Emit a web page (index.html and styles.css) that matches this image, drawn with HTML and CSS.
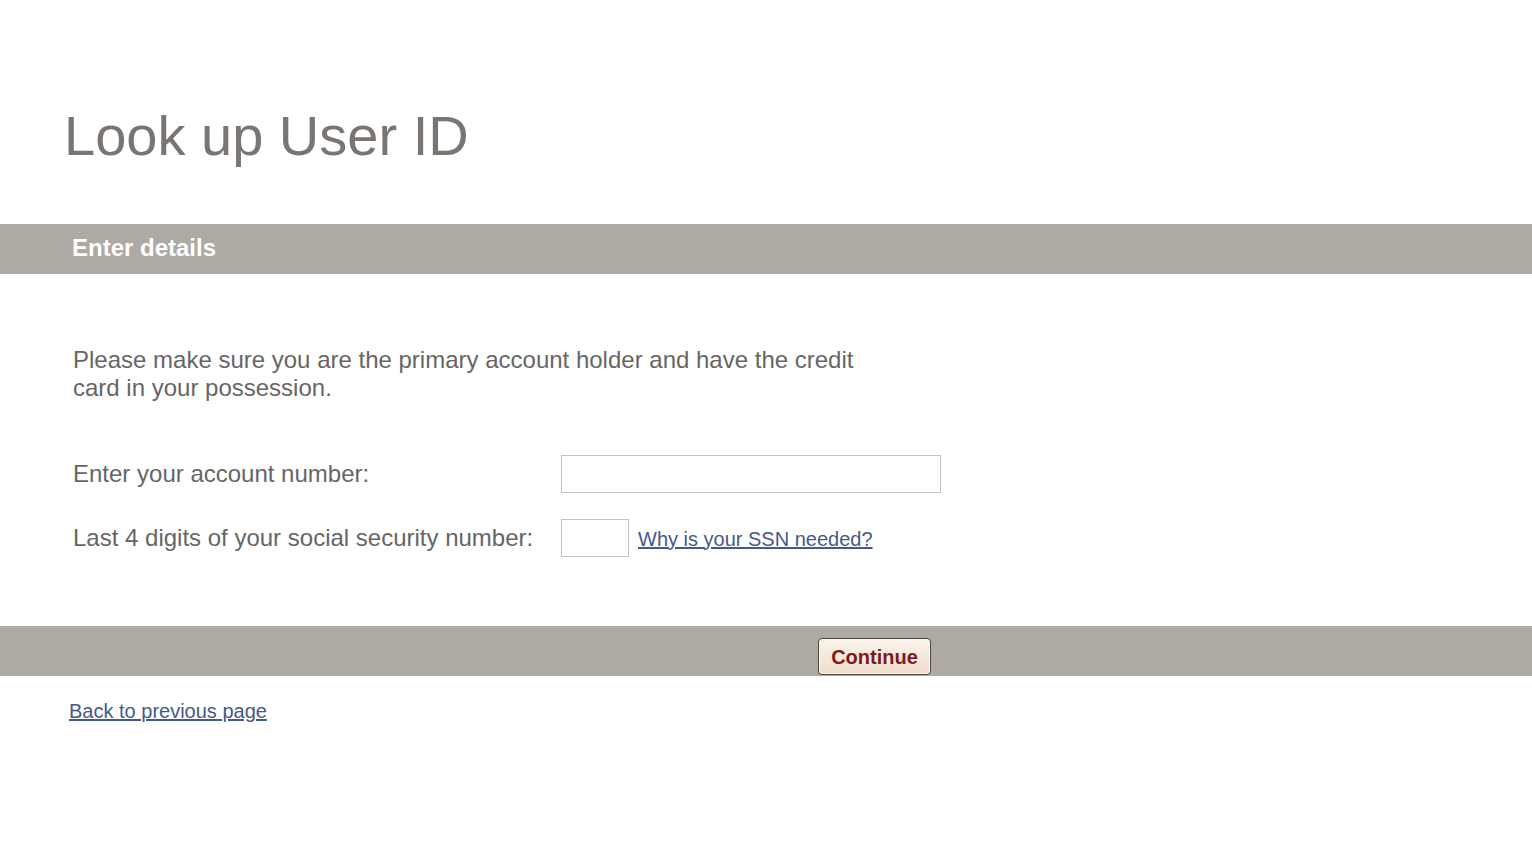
FILE: index.html
```html
<!DOCTYPE html>
<html lang="en">
<head>
    <meta charset="UTF-8">
    <title>Look up User ID</title>
    <link rel="stylesheet" href="styles.css">
</head>
<body>
    <h1 class="page-title">Look up User ID</h1>
    <form class="lookup-form">
        <div class="section-bar">
            <h2>Enter details</h2>
        </div>
        <div class="section-body">
            <p class="intro">Please make sure you are the primary account holder and have the credit card in your possession.</p>
            <div class="field-row">
                <label for="account">Enter your account number:</label>
                <input type="text" id="account" class="input-account">
            </div>
            <div class="field-row">
                <label for="ssn">Last 4 digits of your social security number:</label>
                <input type="text" id="ssn" class="input-ssn" maxlength="4">
                <a href="#" class="help-link">Why is your SSN needed?</a>
            </div>
        </div>
        <div class="action-bar">
            <button type="submit" class="continue-button">Continue</button>
        </div>
    </form>
    <a href="#" class="back-link">Back to previous page</a>
</body>
</html>
```

FILE: styles.css
```css
body {
    font-family: 'Liberation Sans', Arial, sans-serif;
    background: #fff;
    margin: 0;
    color: #666;
}
.page-title {
    font-size: 56px;
    font-weight: normal;
    color: #7a7571;
    margin: 0;
    padding: 104px 0 0 64px;
    height: 224px;
    line-height: 64px;
    box-sizing: border-box;
}
.lookup-form {
    margin: 0;
}
.section-bar {
    background-color: #aea9a3;
    height: 50px;
    padding-left: 72px;
    display: flex;
    align-items: center;
}
.section-bar h2 {
    margin: 0 0 2px 0;
    color: #fff;
    font-size: 24px;
    font-weight: bold;
}
.section-body {
    padding: 72px 0 69px 73px;
}
.intro {
    font-size: 24px;
    line-height: 28px;
    width: 800px;
    margin: 0 0 53px 0;
    color: #666;
}
.field-row {
    display: flex;
    align-items: center;
    margin-bottom: 26px;
}
.field-row:last-child {
    margin-bottom: 0;
}
.field-row label {
    width: 488px;
    font-size: 24px;
    color: #666;
}
.field-row input {
    height: 38px;
    box-sizing: border-box;
    border: 1px solid #c3c3c3;
    margin: 0;
    padding: 0 6px;
    font-size: 18px;
}
.input-account {
    width: 380px;
}
.input-ssn {
    width: 68px;
}
.help-link {
    margin-left: 9px;
    margin-top: 2px;
    font-size: 20px;
    color: #46598a;
}
.action-bar {
    background-color: #aea9a3;
    height: 50px;
    display: flex;
    align-items: flex-start;
    padding-left: 818px;
}
.continue-button {
    margin-top: 12px;
    width: 113px;
    height: 37px;
    border: 1px solid #4a4642;
    border-radius: 4px;
    box-shadow: inset 0 0 0 1px #fff8f0;
    background: linear-gradient(#fbf4ec, #efdccb);
    color: #7c1a1f;
    font-family: 'Liberation Sans', Arial, sans-serif;
    font-size: 20px;
    font-weight: bold;
    cursor: pointer;
    padding: 2px 0 0 0;
}
.back-link {
    display: inline-block;
    margin: 24px 0 0 69px;
    font-size: 20px;
    color: #46598a;
}
```
